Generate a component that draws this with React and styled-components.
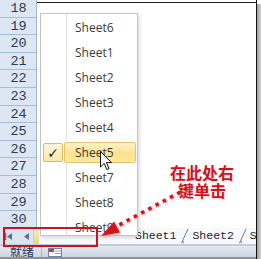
import React from "react";
import styled, { createGlobalStyle } from "styled-components";

const GlobalStyle = createGlobalStyle`
  html, body { margin: 0; padding: 0; background: #ffffff; overflow: hidden; }
  * { box-sizing: border-box; }
`;

const Frame = styled.div`
  position: relative;
  width: 261px;
  height: 259px;
  overflow: hidden;
  display: flex;
  background: #fff;
`;

const Window = styled.div`
  width: 257px;
  height: 259px;
  border-right: 1px solid #141414;
  display: flex;
  flex-direction: column;
`;

const Shadow = styled.div`
  flex: 1;
  background: linear-gradient(90deg, #9c9c9c, #d6d6d6);
  margin-top: 4px;
`;

const SheetArea = styled.div`
  height: 228px;
  display: flex;
  overflow: hidden;
`;

const RowHeaders = styled.div`
  width: 37px;
  background: #dde7f4;
  border-right: 1px solid #9fb4cf;
  display: flex;
  flex-direction: column;
`;

const RowHeader = styled.div`
  flex: 0 0 17.6px;
  height: 17.6px;
  border-bottom: 1px solid #a9bdd6;
  font-family: "Liberation Mono", "DejaVu Sans Mono", monospace;
  font-size: 13.5px;
  line-height: 17px;
  color: #2e3a52;
  text-align: center;
  padding-left: 1px;
`;

const Cells = styled.div`
  flex: 1;
  margin-top: 2px;
  border-top: 1px solid #1c1c1c;
  background: #ffffff;
`;

const TabBar = styled.div`
  height: 18px;
  display: flex;
  border-bottom: 2px solid #c3cdd9;
  background: #f6f8fb;
`;

const NavBox = styled.div`
  flex: none;
  width: 33px;
  background: #dbe5f1;
  display: flex;
  align-items: center;
  gap: 12px;
  padding-left: 5px;
`;

const Splitter = styled.div`
  flex: none;
  width: 6px;
  background: linear-gradient(#f7ecc0, #ecd58a);
  border-left: 1px solid #e3cf8d;
`;

const TabStrip = styled.div`
  flex: 1;
  min-width: 0;
  display: flex;
  align-items: stretch;
  padding-left: 93px;
  overflow: hidden;
`;

const Tab = styled.span`
  flex: none;
  font-family: "Liberation Mono", "DejaVu Sans Mono", monospace;
  font-size: 11.5px;
  line-height: 16px;
  color: #1d2330;
  padding: 0 5px 0 3px;
  white-space: nowrap;
`;

const SlashBox = styled.svg`
  flex: none;
  display: block;
`;

const StatusBar = styled.div`
  flex: 1;
  display: flex;
  align-items: flex-start;
  background: linear-gradient(#e3e9f1, #cbd5e2);
  border-bottom: 2px solid #8c9198;
  overflow: hidden;
`;

const StatusText = styled.span`
  font-family: "Noto Sans CJK SC", sans-serif;
  font-size: 12px;
  line-height: 12px;
  color: #1f3352;
  padding-left: 10px;
  width: 42px;
  border-right: 1px solid #aab6c6;
  height: 100%;
`;

const StatusIcon = styled.div`
  margin-left: 6px;
  margin-top: 2px;
  display: flex;
`;

const Menu = styled.div`
  position: absolute;
  left: 40px;
  top: 13px;
  width: 98px;
  height: 223px;
  background: #fff;
  border: 1px solid #c4c4c4;
  box-shadow: 2px 2px 3px rgba(0, 0, 0, 0.12);
  overflow: hidden;
  z-index: 2;
  padding-top: 1px;
  display: flex;
  flex-direction: column;
  &::before {
    content: "";
    position: absolute;
    left: 25px;
    top: 0;
    bottom: 0;
    width: 1px;
    background: #e2e3e3;
  }
`;

const Item = styled.div`
  flex: 0 0 25px;
  height: 25px;
  display: grid;
  grid-template-columns: 26px 1fr;
  align-items: stretch;
`;

const CheckCell = styled.div`
  display: flex;
  align-items: center;
  padding-left: 2px;
  position: relative;
  z-index: 1;
`;

const CheckBox = styled.div`
  width: 20px;
  height: 19px;
  border: 1px solid #e2b955;
  border-radius: 2px;
  background: linear-gradient(#fdf6dc, #fbe7a6);
  display: flex;
  align-items: center;
  justify-content: center;
  font-family: "DejaVu Sans", sans-serif;
  font-size: 14px;
  line-height: 14px;
  color: #2b2b2b;
`;

const Label = styled.div`
  display: flex;
  align-items: center;
  font-family: "Open Sans", "Noto Sans", sans-serif;
  font-size: 12px;
  color: #3a3a3a;
  padding-left: ${(p) => (p.$active ? "10px" : "8px")};
  margin: ${(p) => (p.$active ? "2px 1px 2px -3px" : "0")};
  border: ${(p) => (p.$active ? "1px solid #e8c466" : "none")};
  border-radius: 2px;
  background: ${(p) =>
    p.$active ? "linear-gradient(#fef3c9, #fde28c 55%, #fce7a4)" : "transparent"};
  position: relative;
  z-index: 1;
`;

const RedBox = styled.div`
  position: absolute;
  left: 3px;
  top: 227px;
  width: 95px;
  height: 20px;
  border: 2px solid #c8141e;
  z-index: 3;
`;

const Annotation = styled.div`
  position: absolute;
  left: 162px;
  top: 163px;
  width: 80px;
  display: flex;
  flex-direction: column;
  align-items: center;
  z-index: 3;
`;

const AnnotationLine = styled.span`
  display: block;
  height: 18px;
  font-family: "Noto Sans CJK SC", sans-serif;
  font-weight: 700;
  font-size: 16px;
  line-height: 18px;
  color: #d0121c;
  text-shadow: 0 0 2px #fff, 1px 1px 2px rgba(120, 0, 0, 0.25);
  white-space: nowrap;
`;

const Overlay = styled.svg`
  position: absolute;
  left: 0;
  top: 0;
  z-index: 4;
  pointer-events: none;
`;

const Cursor = styled.svg`
  position: absolute;
  left: 100px;
  top: 151px;
  z-index: 5;
`;

const rows = [18, 19, 20, 21, 22, 23, 24, 25, 26, 27, 28, 29, 30];
const sheets = ["Sheet6", "Sheet1", "Sheet2", "Sheet3", "Sheet4", "Sheet5", "Sheet7", "Sheet8", "Sheet9"];

const Slash = () => (
  <SlashBox width="8" height="16" viewBox="0 0 8 16">
    <line x1="0.5" y1="15" x2="7" y2="1" stroke="#6f7b8e" strokeWidth="1" />
    <polyline points="0,15.5 2.5,13 2.5,15.5" fill="none" stroke="#8f99a8" strokeWidth="0.8" />
  </SlashBox>
);

function Dots() {
  const start = { x: 186, y: 189 };
  const end = { x: 121, y: 224 };
  const n = 10;
  const pts = [];
  for (let i = 0; i < n; i++) {
    const t = i / (n - 1);
    pts.push({ x: start.x + (end.x - start.x) * t, y: start.y + (end.y - start.y) * t });
  }
  return (
    <g filter="url(#glow)">
      {pts.map((p, i) => (
        <rect
          key={i}
          x={p.x - 1.8}
          y={p.y - 1.8}
          width="3.6"
          height="3.6"
          fill="#d0121c"
          transform={`rotate(-28 ${p.x} ${p.y})`}
        />
      ))}
      <polygon points="101,236 120,232.5 114,221.5" fill="#d0121c" />
    </g>
  );
}

export default function App() {
  return (
    <>
      <GlobalStyle />
      <Frame>
        <Window>
          <SheetArea>
            <RowHeaders>
              {rows.map((r) => (
                <RowHeader key={r}>{r}</RowHeader>
              ))}
            </RowHeaders>
            <Cells />
          </SheetArea>
          <TabBar>
            <NavBox>
              <svg width="7" height="7" viewBox="0 0 7 7">
                <rect x="0" y="0" width="1.3" height="7" fill="#5d7190" />
                <polygon points="7,0 7,7 2,3.5" fill="#5d7190" />
              </svg>
              <svg width="5" height="7" viewBox="0 0 5 7">
                <polygon points="5,0 5,7 0,3.5" fill="#5d7190" />
              </svg>
            </NavBox>
            <Splitter />
            <TabStrip>
              <Tab>Sheet1</Tab>
              <Slash />
              <Tab>Sheet2</Tab>
              <Slash />
              <Tab>Sheet3</Tab>
            </TabStrip>
          </TabBar>
          <StatusBar>
            <StatusText>就绪</StatusText>
            <StatusIcon>
              <svg width="14" height="9" viewBox="0 0 14 9">
                <rect x="0.5" y="0.5" width="13" height="8" fill="#fff" stroke="#6b85aa" />
                <rect x="1" y="1" width="5" height="3" fill="#d33" />
                <line x1="7" y1="3" x2="13" y2="3" stroke="#8aa0c0" />
                <line x1="7" y1="5.5" x2="13" y2="5.5" stroke="#8aa0c0" />
              </svg>
            </StatusIcon>
          </StatusBar>
        </Window>
        <Shadow />

        <Menu>
          {sheets.map((s) => (
            <Item key={s}>
              <CheckCell>{s === "Sheet5" && <CheckBox>✓</CheckBox>}</CheckCell>
              <Label $active={s === "Sheet5"}>{s}</Label>
            </Item>
          ))}
        </Menu>

        <RedBox />
        <Annotation>
          <AnnotationLine>在此处右</AnnotationLine>
          <AnnotationLine>键单击</AnnotationLine>
        </Annotation>

        <Overlay width="261" height="259" viewBox="0 0 261 259">
          <defs>
            <filter id="glow" x="-20%" y="-20%" width="140%" height="140%">
              <feDropShadow dx="1" dy="1" stdDeviation="1.2" floodColor="#e07a80" floodOpacity="0.8" />
            </filter>
          </defs>
          <Dots />
        </Overlay>

        <Cursor width="13" height="21" viewBox="0 0 13 21">
          <path
            d="M0.5 0.5 L0.5 16 L4.2 12.4 L6.8 18.6 L9 17.6 L6.5 11.6 L11.5 11.6 Z"
            fill="#fff"
            stroke="#111"
            strokeWidth="1"
            strokeLinejoin="round"
          />
        </Cursor>
      </Frame>
    </>
  );
}
